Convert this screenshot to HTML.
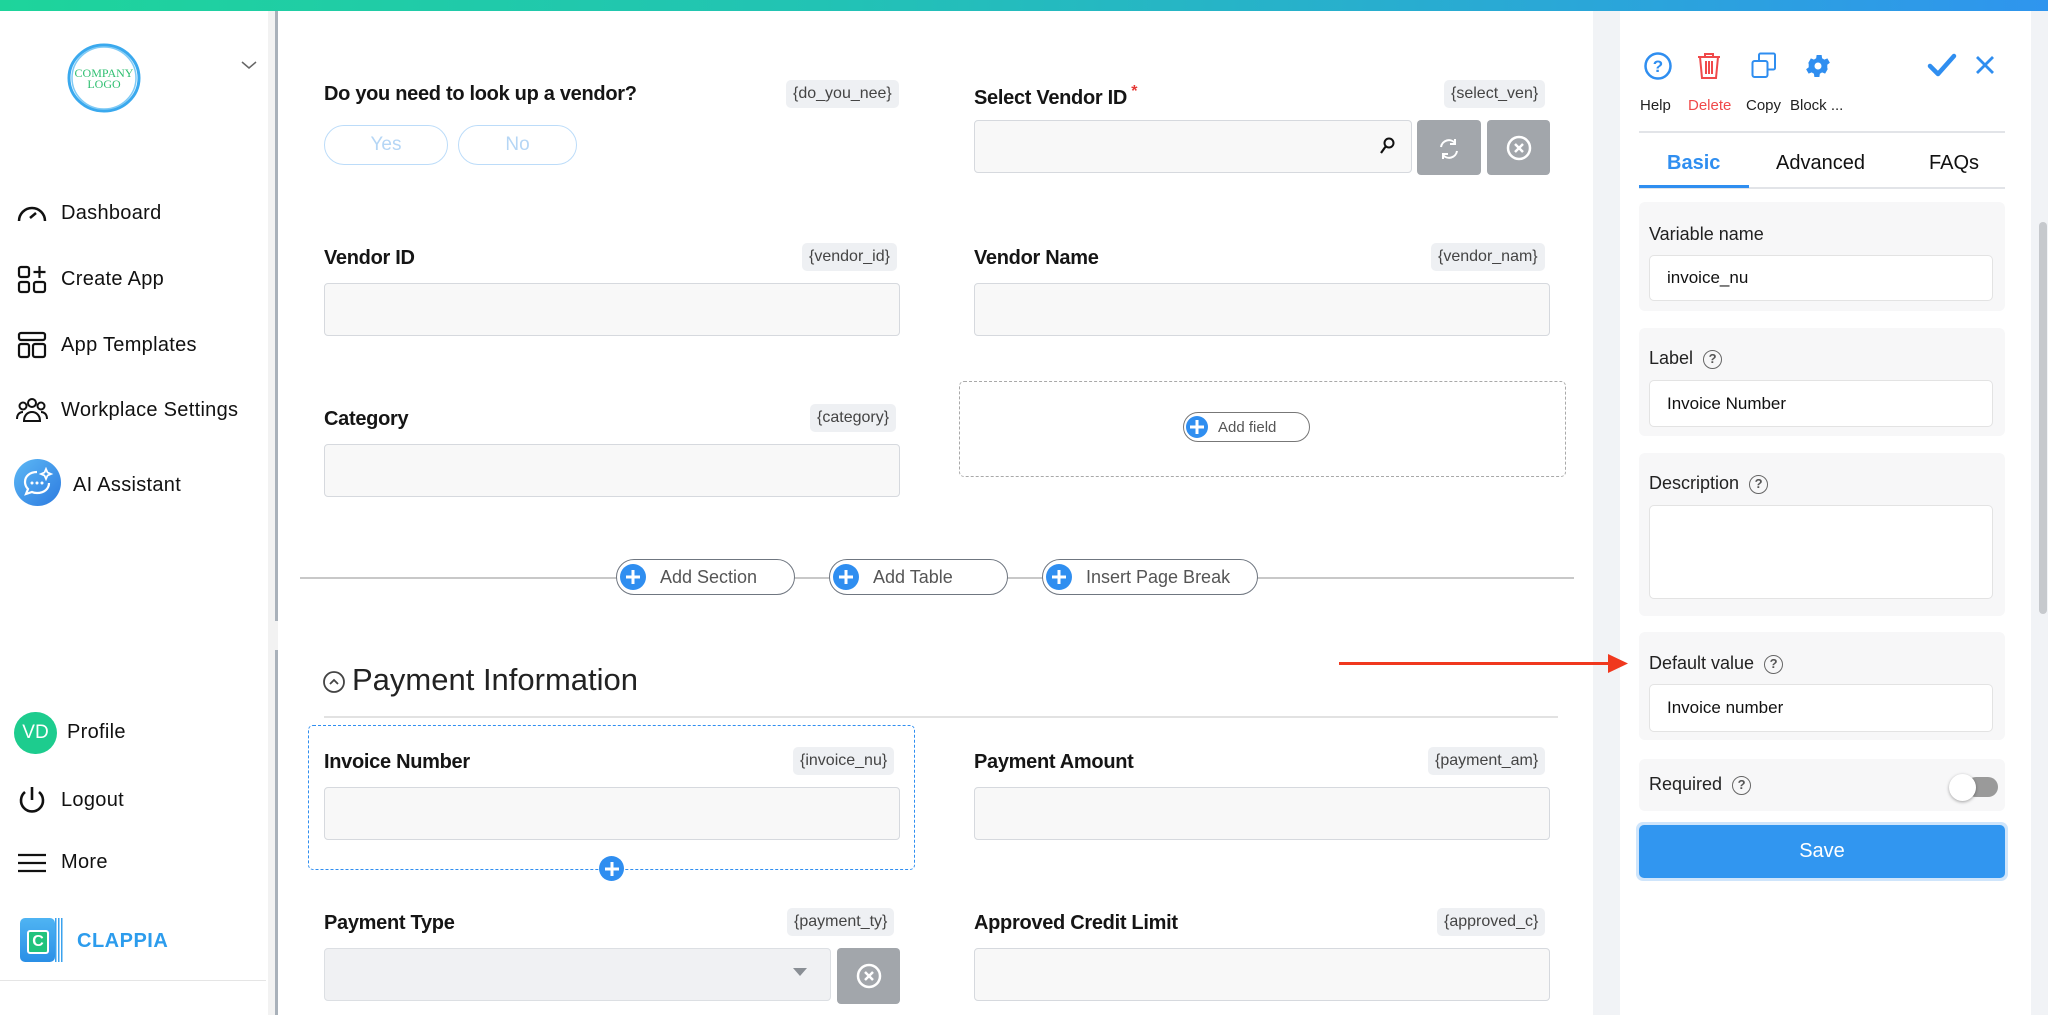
<!DOCTYPE html>
<html><head><meta charset="utf-8"><style>
*{box-sizing:border-box;margin:0;padding:0}
body{width:2048px;height:1015px;overflow:hidden;background:#fff;font-family:"Liberation Sans",Arial,sans-serif;color:#111;position:relative}
.a{position:absolute}
.topbar{left:0;top:0;width:2048px;height:11px;background:linear-gradient(90deg,#1ed49b 0%,#22c3b4 40%,#2f95ee 100%)}
.nav{font-size:20px;color:#111;letter-spacing:.3px}
.lbl{font-size:20px;font-weight:bold;color:#151515;letter-spacing:-.3px}
.tag{background:#eef0f3;border-radius:5px;font-size:16px;color:#444;padding:4px 7px;height:28px;line-height:20px}
.inp{background:#f8f8f8;border:1px solid #d6d9de;border-radius:4px}
.pill{border:1.5px solid #6f7680;border-radius:20px;height:36px;background:#fff;font-size:18px;color:#555;display:flex;align-items:center}
.pill .pl{width:26px;height:26px;border-radius:50%;background:#2f8ef0;margin:0 14px 0 3px;position:relative}
.pl:before,.pl:after{content:"";position:absolute;background:#fff;left:50%;top:50%;transform:translate(-50%,-50%)}
.pl:before{width:14px;height:3px}.pl:after{width:3px;height:14px}
.gbtn{background:#a2a6ab;border-radius:4px}
.card{background:#f7f7f8;border-radius:6px;left:1639px;width:366px}
.card .t{position:absolute;left:10px;font-size:18px;color:#222}
.card .i{position:absolute;left:10px;width:344px;background:#fff;border:1px solid #e3e3e3;border-radius:5px;font-size:17px;color:#111;padding-left:17px;display:flex;align-items:center}
.q{display:inline-block;width:19px;height:19px;border:1.5px solid #666;border-radius:50%;font-size:13px;line-height:16px;text-align:center;color:#555;margin-left:10px;vertical-align:1px;font-weight:bold}
.tl{font-size:15px;color:#222;top:97px}
</style></head><body>
<div class="a topbar"></div>

<!-- sidebar -->
<div class="a" style="left:268px;top:11px;width:10px;height:1004px;background:#f2f2f2"></div>
<div class="a" style="left:275px;top:11px;width:3px;height:610px;background:#a9b1ba"></div>
<div class="a" style="left:275px;top:650px;width:3px;height:365px;background:#a9b1ba"></div>
<svg class="a" style="left:66px;top:40px" width="76" height="76" viewBox="0 0 76 76"><ellipse cx="38" cy="38" rx="35" ry="33" fill="none" stroke="#3aa9ee" stroke-width="3"/><ellipse cx="38" cy="38" rx="32" ry="31" fill="none" stroke="#7fcaf5" stroke-width="1.5"/><text x="38" y="37" font-size="12" fill="#2fbf71" text-anchor="middle" font-family="Liberation Serif">COMPANY</text><text x="38" y="48" font-size="12" fill="#2fbf71" text-anchor="middle" font-family="Liberation Serif">LOGO</text></svg>
<svg class="a" style="left:241px;top:60px" width="16" height="10"><path d="M1 2l7 6 7-6" fill="none" stroke="#666" stroke-width="1.5"/></svg>

<svg class="a" style="left:16px;top:201px" width="32" height="24" viewBox="0 0 32 24"><path d="M3 20A13 13 0 1 1 29 20" fill="none" stroke="#111" stroke-width="2.5"/><path d="M14 17l6-5" stroke="#111" stroke-width="2.5"/></svg>
<div class="a nav" style="left:61px;top:202px">Dashboard</div>
<svg class="a" style="left:17px;top:265px" width="30" height="30" viewBox="0 0 30 30"><rect x="2" y="2" width="10" height="10" rx="2" fill="none" stroke="#111" stroke-width="2.2"/><rect x="2" y="17" width="10" height="10" rx="2" fill="none" stroke="#111" stroke-width="2.2"/><rect x="17" y="17" width="11" height="10" rx="2" fill="none" stroke="#111" stroke-width="2.2"/><path d="M22.5 1v12M16.5 7h12" stroke="#111" stroke-width="2.2"/></svg>
<div class="a nav" style="left:61px;top:268px">Create App</div>
<svg class="a" style="left:17px;top:331px" width="30" height="28" viewBox="0 0 30 28"><rect x="2" y="2" width="26" height="7" rx="2" fill="none" stroke="#111" stroke-width="2.2"/><rect x="2" y="13" width="10" height="13" rx="2" fill="none" stroke="#111" stroke-width="2.2"/><rect x="16" y="13" width="12" height="13" rx="2" fill="none" stroke="#111" stroke-width="2.2"/></svg>
<div class="a nav" style="left:61px;top:334px">App Templates</div>
<svg class="a" style="left:15px;top:397px" width="34" height="26" viewBox="0 0 34 26"><g fill="none" stroke="#111" stroke-width="2"><circle cx="17" cy="6" r="4"/><circle cx="8" cy="9" r="3.5"/><circle cx="26" cy="9" r="3.5"/><path d="M9 24c0-6 4-9 8-9s8 3 8 9z"/><path d="M2 22c0-5 3-7 6-7M32 22c0-5-3-7-6-7"/></g></svg>
<div class="a nav" style="left:61px;top:399px">Workplace Settings</div>
<div class="a" style="left:14px;top:459px;width:47px;height:47px;border-radius:50%;background:linear-gradient(135deg,#5cb8f5,#2d7be0)"></div>
<svg class="a" style="left:21px;top:467px" width="34" height="32" viewBox="0 0 34 32"><path d="M16 5C9 5 4 9 4 15c0 3 1 5 3 7l-2 5 6-2c2 1 3 1 5 1 7 0 12-4 12-10" fill="none" stroke="#fff" stroke-width="2.2"/><path d="M25 2l1.5 3.5L30 7l-3.5 1.5L25 12l-1.5-3.5L20 7l3.5-1.5z" fill="none" stroke="#fff" stroke-width="1.8"/><circle cx="11" cy="16" r="1.5" fill="#fff"/><circle cx="16" cy="16" r="1.5" fill="#fff"/><circle cx="21" cy="16" r="1.5" fill="#fff"/></svg>
<div class="a nav" style="left:73px;top:474px">AI Assistant</div>

<div class="a" style="left:14px;top:712px;width:43px;height:42px;border-radius:21px;background:#1dcc8e;color:#fff;font-size:19px;text-align:center;line-height:42px">VD</div>
<div class="a nav" style="left:67px;top:721px">Profile</div>
<svg class="a" style="left:17px;top:785px" width="30" height="30" viewBox="0 0 30 30"><path d="M8 7a11 11 0 1 0 14 0" fill="none" stroke="#111" stroke-width="2.6"/><path d="M15 2v13" stroke="#111" stroke-width="2.6"/></svg>
<div class="a nav" style="left:61px;top:789px">Logout</div>
<svg class="a" style="left:17px;top:852px" width="30" height="22"><path d="M1 3h28M1 11h28M1 19h28" stroke="#111" stroke-width="2.2"/></svg>
<div class="a nav" style="left:61px;top:851px">More</div>
<div class="a" style="left:20px;top:918px;width:35px;height:44px;border-radius:5px;background:linear-gradient(#4fb4f3,#2a8fe6)"></div>
<div class="a" style="left:27px;top:930px;width:22px;height:24px;background:#21c37d;border:2px solid #fff;border-radius:3px;color:#fff;font-weight:bold;font-size:16px;text-align:center;line-height:20px">C</div>
<div class="a" style="left:55px;top:918px;width:8px;height:44px;background:repeating-linear-gradient(90deg,#3aa2ee 0 1.5px,#fff 1.5px 3px)"></div>
<div class="a" style="left:77px;top:930px;font-size:20px;font-weight:bold;color:#2c9ced;letter-spacing:.5px">CLAPPIA</div>
<div class="a" style="left:0;top:980px;width:266px;height:1px;background:#e5e5e5"></div>

<!-- main -->
<div class="a lbl" style="left:324px;top:83px">Do you need to look up a vendor?</div>
<div class="a tag" style="left:786px;top:80px">{do_you_nee}</div>
<div class="a" style="left:324px;top:125px;width:124px;height:40px;border:1.5px solid #bcdcf9;border-radius:20px;color:#b5d6f5;font-size:19px;text-align:center;line-height:37px">Yes</div>
<div class="a" style="left:458px;top:125px;width:119px;height:40px;border:1.5px solid #bcdcf9;border-radius:20px;color:#b5d6f5;font-size:19px;text-align:center;line-height:37px">No</div>

<div class="a lbl" style="left:974px;top:83px">Select Vendor ID<span style="color:#e53935;font-size:16px;vertical-align:8px"> *</span></div>
<div class="a tag" style="left:1444px;top:80px">{select_ven}</div>
<div class="a inp" style="left:974px;top:120px;width:438px;height:53px"></div>
<svg class="a" style="left:1380px;top:137px" width="16" height="18"><circle cx="9" cy="6" r="4.5" fill="none" stroke="#111" stroke-width="2"/><path d="M6 9l-5 7" stroke="#111" stroke-width="2.2"/></svg>
<div class="a gbtn" style="left:1417px;top:120px;width:64px;height:55px"></div>
<svg class="a" style="left:1436px;top:136px" width="26" height="26" viewBox="0 0 26 26"><path d="M5 11a8 8 0 0 1 14-4M21 15a8 8 0 0 1-14 4" fill="none" stroke="#fff" stroke-width="2"/><path d="M19 3v5h-5M7 23v-5h5" fill="none" stroke="#fff" stroke-width="2"/></svg>
<div class="a gbtn" style="left:1487px;top:120px;width:63px;height:55px"></div>
<svg class="a" style="left:1505px;top:134px" width="28" height="28"><circle cx="14" cy="14" r="11" fill="none" stroke="#fff" stroke-width="2.5"/><path d="M10 10l8 8M18 10l-8 8" stroke="#fff" stroke-width="2.5"/></svg>

<div class="a lbl" style="left:324px;top:247px">Vendor ID</div>
<div class="a tag" style="left:802px;top:243px">{vendor_id}</div>
<div class="a inp" style="left:324px;top:283px;width:576px;height:53px"></div>
<div class="a lbl" style="left:974px;top:247px">Vendor Name</div>
<div class="a tag" style="left:1431px;top:243px">{vendor_nam}</div>
<div class="a inp" style="left:974px;top:283px;width:576px;height:53px"></div>

<div class="a lbl" style="left:324px;top:408px">Category</div>
<div class="a tag" style="left:810px;top:404px">{category}</div>
<div class="a inp" style="left:324px;top:444px;width:576px;height:53px"></div>
<div class="a" style="left:959px;top:381px;width:607px;height:96px;border:1.5px dashed #a9a9a9;border-radius:5px"></div>
<div class="a pill" style="left:1183px;top:412px;width:127px;height:30px;font-size:15px;border-color:#777"><div class="pl" style="width:22px;height:22px;margin:0 10px 0 2px"></div>Add field</div>

<div class="a" style="left:300px;top:577px;width:1274px;height:1.5px;background:#c8c8c8"></div>
<div class="a pill" style="left:616px;top:559px;width:179px"><div class="pl"></div>Add Section</div>
<div class="a pill" style="left:829px;top:559px;width:179px"><div class="pl"></div>Add Table</div>
<div class="a pill" style="left:1042px;top:559px;width:216px"><div class="pl"></div>Insert Page Break</div>

<svg class="a" style="left:322px;top:670px" width="24" height="24"><circle cx="12" cy="12" r="10" fill="none" stroke="#444" stroke-width="1.8"/><path d="M8 14l4-4 4 4" fill="none" stroke="#444" stroke-width="1.8"/></svg>
<div class="a" style="left:352px;top:662px;font-size:31px;color:#222">Payment Information</div>
<div class="a" style="left:324px;top:716px;width:1234px;height:1.5px;background:#e2e2e2"></div>

<div class="a" style="left:308px;top:725px;width:607px;height:145px;border:1.5px dashed #2f8ef0;border-radius:5px"></div>
<div class="a pl" style="left:599px;top:856px;width:25px;height:25px;background:#2f8ef0;border-radius:50%"></div>
<div class="a lbl" style="left:324px;top:751px">Invoice Number</div>
<div class="a tag" style="left:793px;top:747px">{invoice_nu}</div>
<div class="a inp" style="left:324px;top:787px;width:576px;height:53px"></div>
<div class="a lbl" style="left:974px;top:751px">Payment Amount</div>
<div class="a tag" style="left:1428px;top:747px">{payment_am}</div>
<div class="a inp" style="left:974px;top:787px;width:576px;height:53px"></div>

<div class="a lbl" style="left:324px;top:912px">Payment Type</div>
<div class="a tag" style="left:787px;top:908px">{payment_ty}</div>
<div class="a" style="left:324px;top:948px;width:507px;height:53px;background:#f0f1f3;border:1px solid #dcdfe3;border-radius:4px"></div>
<svg class="a" style="left:793px;top:968px" width="14" height="9"><path d="M0 0h14L7 8z" fill="#8a8f95"/></svg>
<div class="a gbtn" style="left:837px;top:948px;width:63px;height:56px"></div>
<svg class="a" style="left:855px;top:962px" width="28" height="28"><circle cx="14" cy="14" r="11" fill="none" stroke="#fff" stroke-width="2.5"/><path d="M10 10l8 8M18 10l-8 8" stroke="#fff" stroke-width="2.5"/></svg>
<div class="a lbl" style="left:974px;top:912px">Approved Credit Limit</div>
<div class="a tag" style="left:1437px;top:908px">{approved_c}</div>
<div class="a inp" style="left:974px;top:948px;width:576px;height:53px"></div>

<!-- right panel -->
<div class="a" style="left:1593px;top:11px;width:27px;height:1004px;background:#f1f3f6"></div>
<div class="a" style="left:2031px;top:11px;width:17px;height:1004px;background:#f1f3f6"></div>
<div class="a" style="left:2039px;top:222px;width:8px;height:392px;border-radius:4px;background:#c6c9cd"></div>

<!-- arrow -->
<div class="a" style="left:1339px;top:662px;width:276px;height:3px;background:#f0381e"></div>
<svg class="a" style="left:1608px;top:654px" width="20" height="19"><path d="M0 0l20 9.5L0 19z" fill="#f0381e"/></svg>

<svg class="a" style="left:1643px;top:51px" width="30" height="30"><circle cx="15" cy="15" r="12.5" fill="none" stroke="#2f8ef0" stroke-width="2.5"/><text x="15" y="21" font-size="17" font-weight="bold" fill="#2f8ef0" text-anchor="middle" font-family="Liberation Sans">?</text></svg>
<svg class="a" style="left:1696px;top:52px" width="26" height="28" viewBox="0 0 26 28"><g fill="none" stroke="#f0494a" stroke-width="2"><path d="M2 5h22M9 5V2h8v3"/><path d="M4 5l2 21h14l2-21"/><path d="M10 9v13M13 9v13M16 9v13"/></g></svg>
<svg class="a" style="left:1751px;top:52px" width="26" height="28"><g fill="none" stroke="#2f8ef0" stroke-width="2"><rect x="1.5" y="9" width="15" height="16" rx="2"/><path d="M8 9V3a1.5 1.5 0 0 1 1.5-1.5h13A1.5 1.5 0 0 1 24 3v13a1.5 1.5 0 0 1-1.5 1.5H17"/></g></svg>
<svg class="a" style="left:1803px;top:51px" width="30" height="30" viewBox="0 0 24 24"><path fill="#2f8ef0" fill-rule="evenodd" d="M19.4 13a7.5 7.5 0 0 0 0-2l2.1-1.6-2-3.5-2.5 1a7 7 0 0 0-1.7-1l-.4-2.7h-4l-.4 2.7a7 7 0 0 0-1.7 1l-2.5-1-2 3.5L4.6 11a7.5 7.5 0 0 0 0 2l-2.1 1.6 2 3.5 2.5-1a7 7 0 0 0 1.7 1l.4 2.7h4l.4-2.7a7 7 0 0 0 1.7-1l2.5 1 2-3.5zM12 14.8a2.8 2.8 0 1 1 0-5.6 2.8 2.8 0 0 1 0 5.6z"/></svg>
<svg class="a" style="left:1927px;top:52px" width="30" height="26"><path d="M3 14l8 8L27 4" fill="none" stroke="#2f8ef0" stroke-width="4.5" stroke-linecap="round" stroke-linejoin="round"/></svg>
<svg class="a" style="left:1975px;top:55px" width="20" height="20"><path d="M2 2l16 16M18 2L2 18" stroke="#2f8ef0" stroke-width="2.8"/></svg>
<div class="a tl" style="left:1640px">Help</div>
<div class="a tl" style="left:1688px;color:#f0494a">Delete</div>
<div class="a tl" style="left:1746px">Copy</div>
<div class="a tl" style="left:1790px">Block ...</div>
<div class="a" style="left:1639px;top:131px;width:366px;height:1.5px;background:#e2e4e8"></div>
<div class="a" style="left:1667px;top:152px;font-size:20px;font-weight:bold;color:#2f8ef0">Basic</div>
<div class="a" style="left:1776px;top:152px;font-size:20px;color:#111">Advanced</div>
<div class="a" style="left:1929px;top:152px;font-size:20px;color:#111">FAQs</div>
<div class="a" style="left:1639px;top:187px;width:366px;height:1.5px;background:#e2e4e8"></div>
<div class="a" style="left:1639px;top:185px;width:110px;height:3px;background:#2f8ef0"></div>

<div class="a card" style="top:202px;height:109px"><div class="t" style="top:22px">Variable name</div><div class="i" style="top:53px;height:46px">invoice_nu</div></div>
<div class="a card" style="top:328px;height:108px"><div class="t" style="top:20px">Label<span class="q">?</span></div><div class="i" style="top:52px;height:47px">Invoice Number</div></div>
<div class="a card" style="top:453px;height:163px"><div class="t" style="top:20px">Description<span class="q">?</span></div><div class="i" style="top:52px;height:94px"></div></div>
<div class="a card" style="top:632px;height:108px"><div class="t" style="top:21px">Default value<span class="q">?</span></div><div class="i" style="top:52px;height:48px">Invoice number</div></div>
<div class="a card" style="top:759px;height:52px"><div class="t" style="top:15px">Required<span class="q">?</span></div>
<div class="a" style="left:327px;top:18px;width:32px;height:20px;border-radius:10px;background:#9a9a9a"></div>
<div class="a" style="left:310px;top:15px;width:27px;height:27px;border-radius:50%;background:#fff;box-shadow:0 1px 3px rgba(0,0,0,.35)"></div></div>
<div class="a" style="left:1636px;top:822px;width:372px;height:59px;border-radius:7px;background:#cfe5fb"></div>
<div class="a" style="left:1639px;top:825px;width:366px;height:53px;border-radius:5px;background:#3196f0;color:#fff;font-size:20px;text-align:center;line-height:53px">Save</div>
</body></html>
